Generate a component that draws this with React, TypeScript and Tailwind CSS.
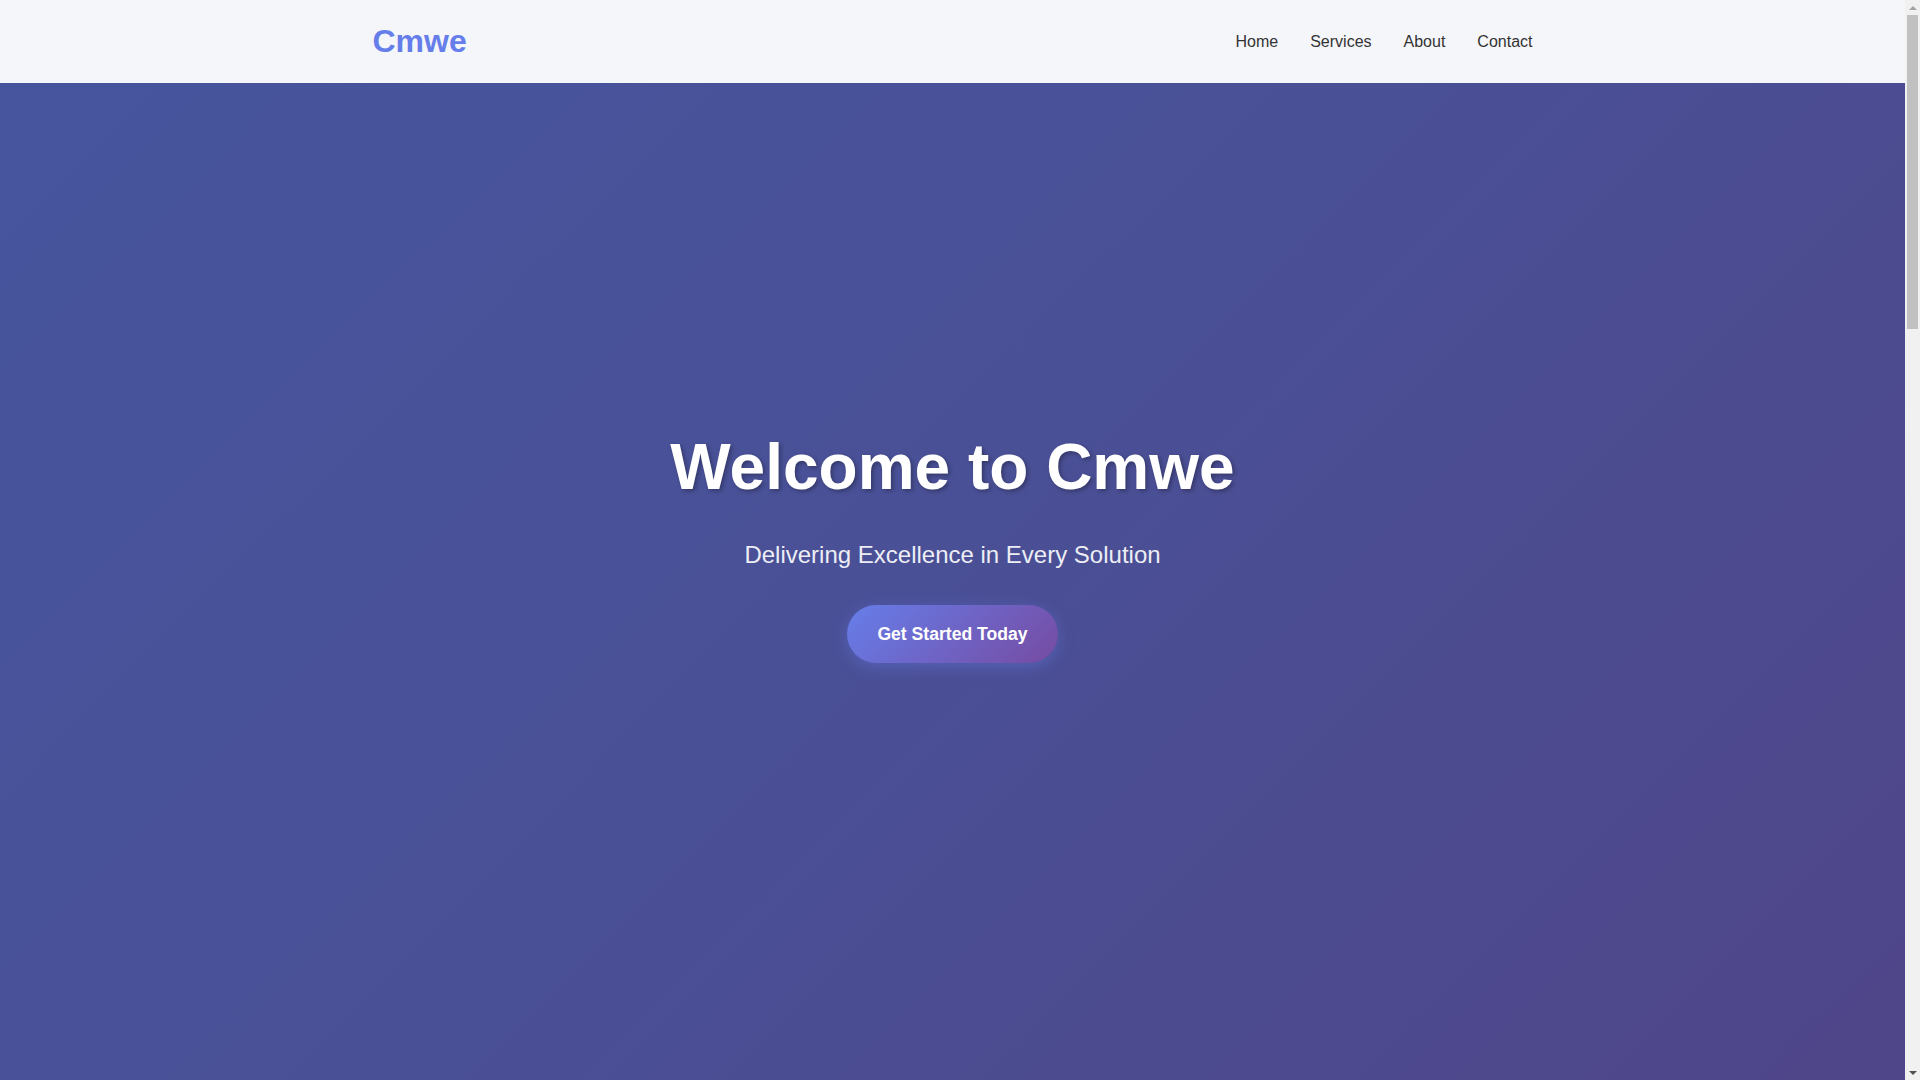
import React from 'react';

const links = ['Home', 'Services', 'About', 'Contact'];

const services = [
  { title: 'Consulting', text: 'Strategic guidance tailored to your business goals.' },
  { title: 'Development', text: 'Robust, scalable solutions built with modern technology.' },
  { title: 'Support', text: 'Reliable assistance whenever you need it most.' },
];

// Imitates the browser's scrollbar shown in the reference
function ScrollTrack() {
  return (
    <div className="fixed top-0 right-0 z-[60] w-[15px] h-screen bg-[#f1f1f1] flex flex-col items-center">
      <div className="h-[15px] flex items-center justify-center">
        <div className="w-0 h-0 border-x-[4px] border-x-transparent border-b-[4px] border-b-[#a3a3a3]" />
      </div>
      <div className="w-[11px] h-[314px] bg-[#c1c1c1]" />
      <div className="flex-1" />
      <div className="h-[15px] flex items-center justify-center">
        <div className="w-0 h-0 border-x-[4px] border-x-transparent border-t-[4px] border-t-[#505050]" />
      </div>
    </div>
  );
}

export default function App() {
  return (
    <div className="pr-[15px] font-['Liberation_Sans',Arial,sans-serif] text-[#333] leading-[1.6]">
      <ScrollTrack />

      {/* Header */}
      <header className="fixed top-0 left-0 right-[15px] z-50 bg-[#f5f6fa]">
        <nav className="max-w-[1200px] mx-auto px-5 h-[83px] flex items-center justify-between">
          <a href="#" className="text-[2rem] font-bold text-[#667eea]">
            Cmwe
          </a>
          <ul className="flex gap-8">
            {links.map((l) => (
              <li key={l}>
                <a href="#" className="text-base text-[#333]">
                  {l}
                </a>
              </li>
            ))}
          </ul>
        </nav>
      </header>

      {/* Hero */}
      <section className="min-h-screen pt-[12px] flex items-center justify-center text-center text-white bg-[linear-gradient(135deg,#45559e_0%,#4a5096_50%,#4f4589_100%)]">
        <div className="px-5">
          <h1 className="text-[4rem] font-bold leading-[1.2] mb-[31px] [text-shadow:2px_2px_4px_rgba(0,0,0,0.3)]">
            Welcome to Cmwe
          </h1>
          <p className="text-2xl leading-[1.5] mb-8 opacity-90">
            Delivering Excellence in Every Solution
          </p>
          <a
            href="#"
            className="inline-block px-[30px] py-4 rounded-full text-[1.1rem] leading-[1.5] font-bold text-white bg-[linear-gradient(135deg,#667eea_0%,#764ba2_100%)] shadow-[0_4px_15px_rgba(102,126,234,0.4)]"
          >
            Get Started Today
          </a>
        </div>
      </section>

      {/* Services */}
      <section className="py-24 bg-white">
        <div className="max-w-[1200px] mx-auto px-5">
          <h2 className="text-[2.5rem] font-bold text-center mb-16">Our Services</h2>
          <div className="grid grid-cols-3 gap-8">
            {services.map((s) => (
              <div key={s.title} className="p-10 rounded-2xl bg-[#f8f9fc] shadow-md h-[320px]">
                <h3 className="text-2xl font-bold text-[#667eea] mb-4">{s.title}</h3>
                <p className="text-[#666]">{s.text}</p>
              </div>
            ))}
          </div>
        </div>
      </section>

      {/* About */}
      <section className="py-24 bg-[#f8f9fc]">
        <div className="max-w-[1200px] mx-auto px-5 min-h-[520px]">
          <h2 className="text-[2.5rem] font-bold text-center mb-10">About Us</h2>
          <p className="max-w-[800px] mx-auto text-center text-lg text-[#666]">
            Cmwe is committed to delivering high quality solutions that help our
            clients grow. Our team combines experience and creativity to solve
            problems and exceed expectations.
          </p>
        </div>
      </section>

      {/* Contact */}
      <section className="py-24 bg-white">
        <div className="max-w-[600px] mx-auto px-5 min-h-[560px]">
          <h2 className="text-[2.5rem] font-bold text-center mb-10">Contact Us</h2>
          <form className="flex flex-col gap-4">
            <input className="border border-gray-300 rounded-lg px-4 py-3" placeholder="Your Name" />
            <input className="border border-gray-300 rounded-lg px-4 py-3" placeholder="Your Email" />
            <textarea className="border border-gray-300 rounded-lg px-4 py-3 h-40" placeholder="Your Message" />
            <button type="button" className="self-center px-8 py-4 rounded-full font-bold text-white bg-[linear-gradient(135deg,#667eea_0%,#764ba2_100%)]">
              Send Message
            </button>
          </form>
        </div>
      </section>

      {/* Footer */}
      <footer className="py-10 bg-[#2d2d3a] text-center text-[#ccc]">
        <p>&copy; 2024 Cmwe. All rights reserved.</p>
      </footer>
    </div>
  );
}
